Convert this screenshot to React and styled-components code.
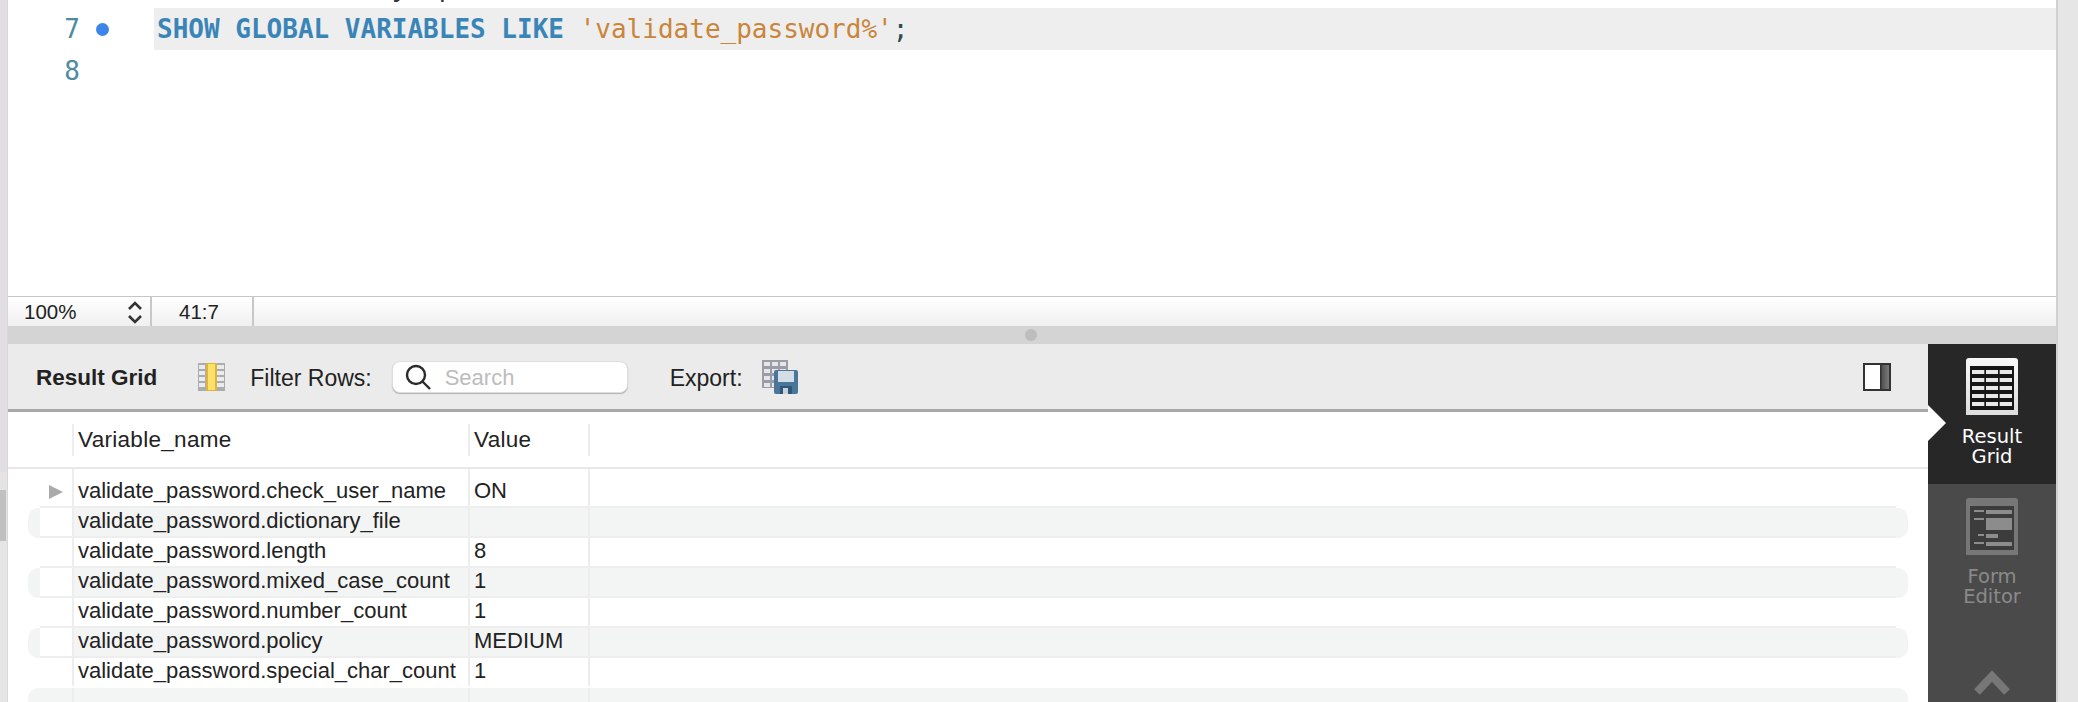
import React from 'react';
import styled, { createGlobalStyle } from 'styled-components';

const GlobalStyle = createGlobalStyle`
  html, body {
    margin: 0;
    padding: 0;
    background: #fff;
    overflow: hidden;
  }
  * { box-sizing: border-box; }
`;

const Page = styled.div`
  width: 2078px;
  height: 702px;
  display: flex;
  overflow: hidden;
  font-family: "Liberation Sans", Arial, sans-serif;
  color: #222;
`;

// Left window strip with the clipped scrollbar thumb
const LeftStrip = styled.div`
  width: 8px;
  display: flex;
  flex-direction: column;
  background: #e4e4e4;
  border-right: 1px solid #d8d8d8;
`;

const StripPart = styled.div`
  height: ${(p) => p.$h}px;
  flex: ${(p) => (p.$fill ? 1 : 'none')};
  width: ${(p) => (p.$thumb ? '6px' : 'auto')};
  background: ${(p) => p.$bg};
`;

const RightStrip = styled.div`
  width: 22px;
  background: #e6e6e6;
  border-left: 2px solid #d0d0d0;
`;

const Main = styled.div`
  flex: 1;
  min-width: 0;
  display: flex;
  flex-direction: column;
`;

// Editor
const Editor = styled.div`
  height: 296px;
  overflow: hidden;
  background: #fff;
  font-family: "DejaVu Sans Mono", "Liberation Mono", monospace;
  font-size: 26px;
`;

const Lines = styled.div`
  margin-top: -34px;
`;

const Line = styled.div`
  height: 42px;
  display: flex;
  align-items: center;
`;

const LineNo = styled.div`
  width: 72px;
  text-align: right;
  color: #4f8ba0;
`;

const DotSlot = styled.div`
  width: 74px;
  display: flex;
  justify-content: center;
  padding-right: 30px;
`;

const Dot = styled.span`
  width: 13px;
  height: 13px;
  border-radius: 50%;
  background: #3b86e8;
`;

const Code = styled.div`
  flex: 1;
  height: 100%;
  line-height: 42px;
  padding-left: 3px;
  white-space: pre;
  background: ${(p) => (p.$active ? '#eeeeee' : 'transparent')};
  color: #2f4a4f;
`;

const Keyword = styled.span`
  color: #3a85b8;
  font-weight: bold;
`;

const Str = styled.span`
  color: #c9853a;
`;

const Tail = styled.span`
  color: ${(p) => p.$c};
`;

// Status bar below the editor
const StatusBar = styled.div`
  height: 30px;
  display: flex;
  border-top: 1px solid #c6c6c6;
  background: linear-gradient(#ffffff, #f0f0f0);
  font-size: 20.5px;
`;

const ZoomCell = styled.div`
  width: 144px;
  padding-left: 16px;
  display: flex;
  align-items: center;
  justify-content: space-between;
  border-right: 2px solid #c8c8c8;
  padding-right: 6px;
`;

const PosCell = styled.div`
  width: 102px;
  padding-left: 27px;
  display: flex;
  align-items: center;
  border-right: 2px solid #c8c8c8;
`;

const Splitter = styled.div`
  height: 18px;
  background: #d4d4d4;
  display: flex;
  justify-content: center;
  align-items: center;
  padding-right: 2px;
`;

const SplitDot = styled.span`
  width: 12px;
  height: 12px;
  border-radius: 50%;
  background: #bdbdbd;
`;

// Result area
const ResultArea = styled.div`
  flex: 1;
  min-height: 0;
  display: flex;
`;

const ResultPane = styled.div`
  flex: 1;
  min-width: 0;
  display: flex;
  flex-direction: column;
`;

const Toolbar = styled.div`
  height: 68px;
  display: flex;
  align-items: center;
  padding: 1px 37px 0 28px;
  background: #ebebeb;
  border-bottom: 3px solid #a8a8a8;
  font-size: 23px;
`;

const ToolLabel = styled.span`
  margin-left: ${(p) => p.$ml || 0}px;
  padding-top: 2px;
  font-weight: ${(p) => (p.$bold ? 'bold' : 'normal')};
  font-size: ${(p) => (p.$bold ? '22.5px' : 'inherit')};
`;

const IconSlot = styled.span`
  display: flex;
  margin-left: ${(p) => p.$ml || 0}px;
`;

const SearchBox = styled.div`
  width: 236px;
  height: 32px;
  margin-left: 20px;
  display: flex;
  align-items: center;
  gap: 14px;
  padding-left: 12px;
  background: #fff;
  border: 1px solid #dedede;
  border-radius: 8px;
  box-shadow: 0 1px 1px rgba(0, 0, 0, 0.25);
  font-size: 22px;
  color: #bcbcbc;
`;

const SearchHint = styled.span`
  padding-top: 2px;
`;

const ToolSpacer = styled.div`
  flex: 1;
`;

const GridHeader = styled.div`
  height: 57px;
  padding: 12px 0 11px 64px;
  display: flex;
  border-bottom: 2px solid #e8e8e8;
  font-size: 22.5px;
`;

const HeaderCell = styled.div`
  width: ${(p) => p.$w}px;
  padding-left: 4px;
  display: flex;
  align-items: center;
  letter-spacing: 0.3px;
  border-left: 2px solid #ededed;
`;

const GridBody = styled.div`
  flex: 1;
  min-height: 0;
  overflow: hidden;
  padding: 9px 20px 0;
  position: relative;
  font-size: 22px;
`;

const Row = styled.div`
  height: 30px;
  padding: 0 12px;
  background: ${(p) => (p.$stripe ? '#f3f4f4' : '#fff')};
  border-radius: ${(p) => (p.$stripe ? '10px' : '0')};
`;

const RowInner = styled.div`
  height: 100%;
  display: flex;
  border-bottom: 2px solid ${(p) => (p.$plain ? 'transparent' : '#eeeeee')};
`;

const Gutter = styled.div`
  width: 32px;
  display: flex;
  align-items: center;
  justify-content: flex-end;
  padding-right: 9px;
  background: ${(p) => (p.$clear ? 'transparent' : '#fff')};
`;

const Arrow = styled.span`
  width: 14px;
  height: 14px;
  background: #aaaaaa;
  clip-path: polygon(0 0, 100% 50%, 0 100%);
`;

const Cell = styled.div`
  width: ${(p) => p.$w}px;
  padding-left: 4px;
  line-height: 26px;
  white-space: nowrap;
  border-left: 2px solid #ededed;
`;

const FillCell = styled.div`
  flex: 1;
  border-left: 2px solid #ededed;
`;

const TopGap = styled.div`
  position: absolute;
  top: 0;
  left: 64px;
  width: 518px;
  height: 9px;
  border-left: 2px solid #ededed;
  border-right: 2px solid #ededed;

  &::after {
    content: '';
    position: absolute;
    top: 0;
    left: 396px;
    height: 9px;
    border-left: 2px solid #ededed;
    margin-left: -2px;
  }
`;

// Right side tabs
const SideBar = styled.div`
  width: 128px;
  display: flex;
  flex-direction: column;
  background: #4a4a4a;
`;

const SideTab = styled.div`
  position: relative;
  height: 140px;
  padding-top: 14px;
  display: flex;
  flex-direction: column;
  align-items: center;
  background: ${(p) => (p.$active ? '#272727' : '#4a4a4a')};
  color: ${(p) => (p.$active ? '#ffffff' : '#8a8a8a')};
  font-family: "DejaVu Sans", sans-serif;
  font-size: 19.5px;
  line-height: 20px;
  text-align: center;
`;

const TabText = styled.div`
  margin-top: ${(p) => p.$mt}px;
  font-weight: ${(p) => (p.$active ? 500 : 400)};
`;

const TabPointer = styled.span`
  position: absolute;
  left: 0;
  top: 61px;
  width: 18px;
  height: 36px;
  background: #fff;
  clip-path: polygon(0 0, 100% 50%, 0 100%);
`;

const SideChevron = styled.div`
  margin-top: auto;
  padding-bottom: 6px;
  display: flex;
  justify-content: center;
`;

const StepperIcon = () => (
  <svg width="18" height="24" viewBox="0 0 18 24" fill="none" stroke="#333" strokeWidth="2.6">
    <path d="M3 9 L9 3 L15 9" />
    <path d="M3 16 L9 22 L15 16" />
  </svg>
);

const ColumnsIcon = () => (
  <svg width="27" height="28" viewBox="0 0 27 28">
    <rect width="27" height="28" fill="#a9adb0" />
    {[2, 8, 14, 20].map((y) => (
      <g key={y} fill="#e9ebec">
        <rect x="1" y={y} width="6" height="4" />
        <rect x="19" y={y} width="7" height="4" />
      </g>
    ))}
    <rect x="8" width="11" height="28" fill="#e2b33a" />
    <rect x="10" y="1" width="7" height="26" fill="#fbe168" />
  </svg>
);

const SearchIcon = () => (
  <svg width="26" height="26" viewBox="0 0 26 26" fill="none" stroke="#2a2a2a" strokeWidth="2.4">
    <circle cx="11" cy="11" r="9" />
    <path d="M17.5 17.5 L25 25" />
  </svg>
);

const ExportIcon = () => (
  <svg width="36" height="34" viewBox="0 0 36 34">
    <rect width="26" height="28" fill="#9c9ca6" />
    {[2, 9, 16, 23].map((y) => (
      <g key={y} fill="#e4e6ea">
        <rect x="2" y={y} width="6" height="4" />
        <rect x="10" y={y} width="6" height="4" />
        <rect x="18" y={y} width="6" height="4" />
      </g>
    ))}
    <rect x="12" y="10" width="24" height="24" rx="2" fill="#4a7699" />
    <rect x="16" y="11" width="16" height="11" fill="#d3dde6" />
    <rect x="18" y="26" width="12" height="8" fill="#2f5878" />
    <rect x="21" y="28" width="5" height="6" fill="#c9d2da" />
  </svg>
);

const PanelIcon = () => (
  <svg width="28" height="28" viewBox="0 0 28 28">
    <defs>
      <linearGradient id="panelFill" x1="0" x2="1" y1="0" y2="0">
        <stop offset="0" stopColor="#4e4e4e" />
        <stop offset="1" stopColor="#7a7a7a" />
      </linearGradient>
    </defs>
    <rect x="1" y="1" width="26" height="26" fill="#fff" stroke="#333" strokeWidth="2" />
    <rect x="18" y="2" width="8" height="24" fill="url(#panelFill)" />
    <rect x="17" y="1" width="1.5" height="26" fill="#333" />
  </svg>
);

const GRID_CELLS_X = [[6, 12.3], [20, 12], [33.7, 12.3]];

const ResultGridIcon = () => (
  <svg width="52" height="58" viewBox="0 0 52 58">
    <defs>
      <linearGradient id="tabFrame" x1="0" x2="0" y1="0" y2="1">
        <stop offset="0" stopColor="#f8f8f8" />
        <stop offset="1" stopColor="#dddddd" />
      </linearGradient>
    </defs>
    <path d="M3 0 H49 Q52 0 52 3 V57 H0 V3 Q0 0 3 0 Z" fill="url(#tabFrame)" />
    <rect x="4" y="8" width="44" height="44" fill="#161616" />
    {[12, 20, 28, 36, 44].map((y) =>
      GRID_CELLS_X.map(([x, w]) => (
        <rect key={`${x}-${y}`} x={x} y={y} width={w} height="4" fill="#e8e8e8" />
      ))
    )}
  </svg>
);

const FormEditorIcon = () => (
  <svg width="52" height="58" viewBox="0 0 52 58">
    <path d="M3 0 H49 Q52 0 52 3 V57 H0 V3 Q0 0 3 0 Z" fill="#777777" />
    <rect x="4" y="8" width="44" height="44" fill="#3c3c3c" />
    <g fill="#8c8c8c">
      <rect x="8" y="12" width="10" height="2" />
      <rect x="20" y="12" width="26" height="4" />
      <rect x="8" y="20" width="10" height="2" />
      <rect x="20" y="20" width="26" height="12" />
      <rect x="12" y="36" width="6" height="2" />
      <rect x="20" y="36" width="12" height="4" />
      <rect x="8" y="44" width="10" height="2" />
      <rect x="20" y="44" width="26" height="4" />
    </g>
  </svg>
);

const ChevronUpIcon = () => (
  <svg width="36" height="26" viewBox="0 0 36 26" fill="none" stroke="#777777" strokeWidth="8">
    <path d="M3 22 L18 6 L33 22" />
  </svg>
);

const rows = [
  ['validate_password.check_user_name', 'ON'],
  ['validate_password.dictionary_file', ''],
  ['validate_password.length', '8'],
  ['validate_password.mixed_case_count', '1'],
  ['validate_password.number_count', '1'],
  ['validate_password.policy', 'MEDIUM'],
  ['validate_password.special_char_count', '1'],
];

const App = () => {
  return (
    <Page>
      <GlobalStyle />
      <LeftStrip>
        <StripPart $h={472} $bg="#e0dee2" />
        <StripPart $h={18} $bg="#e4e4e4" />
        <StripPart $h={51} $thumb $bg="#c0c0c0" />
        <StripPart $fill $bg="#e5e5e5" />
      </LeftStrip>

      <Main>
        <Editor>
          <Lines>
            <Line>
              <LineNo />
              <DotSlot />
              <Code>
                <Tail $c="#333">{'               y  p'}</Tail>
                <Tail $c="#3a9ad9">{'     )'}</Tail>
              </Code>
            </Line>
            <Line>
              <LineNo>7</LineNo>
              <DotSlot>
                <Dot />
              </DotSlot>
              <Code $active>
                <Keyword>SHOW GLOBAL VARIABLES LIKE</Keyword> <Str>'validate_password%'</Str>;
              </Code>
            </Line>
            <Line>
              <LineNo>8</LineNo>
              <DotSlot />
              <Code />
            </Line>
          </Lines>
        </Editor>

        <StatusBar>
          <ZoomCell>
            100%
            <StepperIcon />
          </ZoomCell>
          <PosCell>41:7</PosCell>
        </StatusBar>

        <Splitter>
          <SplitDot />
        </Splitter>

        <ResultArea>
          <ResultPane>
            <Toolbar>
              <ToolLabel $bold>Result Grid</ToolLabel>
              <IconSlot $ml={41}>
                <ColumnsIcon />
              </IconSlot>
              <ToolLabel $ml={25}>Filter Rows:</ToolLabel>
              <SearchBox>
                <SearchIcon />
                <SearchHint>Search</SearchHint>
              </SearchBox>
              <ToolLabel $ml={42}>Export:</ToolLabel>
              <IconSlot $ml={19}>
                <ExportIcon />
              </IconSlot>
              <ToolSpacer />
              <PanelIcon />
            </Toolbar>

            <GridHeader>
              <HeaderCell $w={396}>Variable_name</HeaderCell>
              <HeaderCell $w={120}>Value</HeaderCell>
              <HeaderCell $w={1} />
            </GridHeader>

            <GridBody>
              <TopGap />
              {rows.map(([name, value], i) => (
                <Row key={name} $stripe={i % 2 === 1}>
                  <RowInner $plain={i === rows.length - 1}>
                    <Gutter>{i === 0 && <Arrow />}</Gutter>
                    <Cell $w={396}>{name}</Cell>
                    <Cell $w={120}>{value}</Cell>
                    <FillCell />
                  </RowInner>
                </Row>
              ))}
              <Row $stripe>
                <RowInner $plain>
                  <Gutter $clear />
                  <Cell $w={396} />
                  <Cell $w={120} />
                  <FillCell />
                </RowInner>
              </Row>
            </GridBody>
          </ResultPane>

          <SideBar>
            <SideTab $active>
              <ResultGridIcon />
              <TabPointer />
              <TabText $active $mt={11}>
                Result
                <br />
                Grid
              </TabText>
            </SideTab>
            <SideTab>
              <FormEditorIcon />
              <TabText $mt={11}>
                Form
                <br />
                Editor
              </TabText>
            </SideTab>
            <SideChevron>
              <ChevronUpIcon />
            </SideChevron>
          </SideBar>
        </ResultArea>
      </Main>

      <RightStrip />
    </Page>
  );
};

export default App;
